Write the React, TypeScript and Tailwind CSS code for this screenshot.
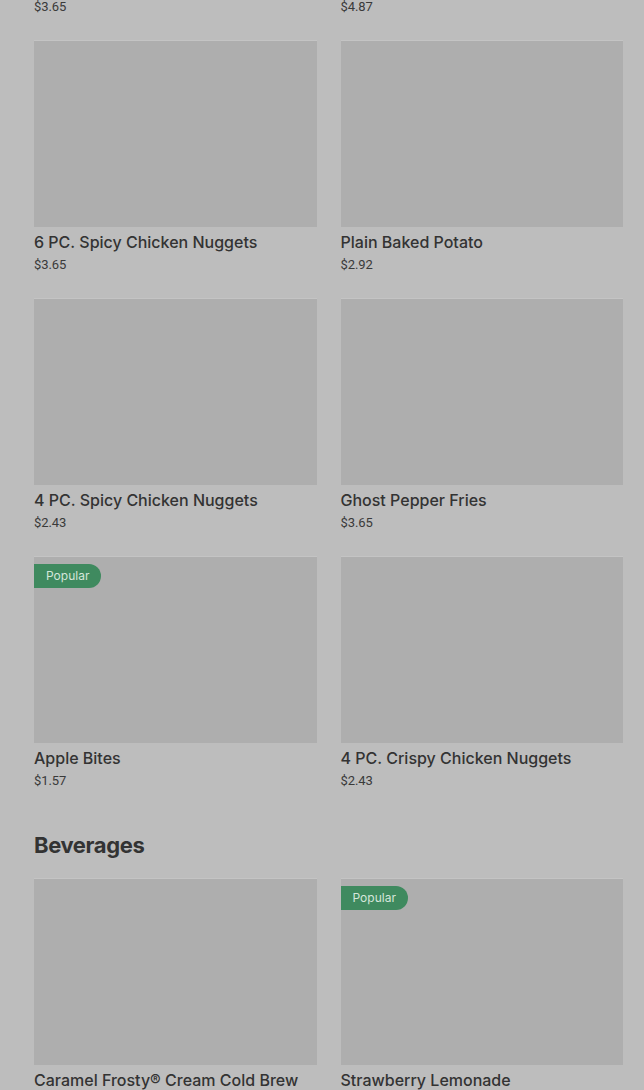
type Item = { name: string; price: string; popular?: boolean }

const sides: Item[] = [
  { name: 'Large Natural-Cut Fries', price: '$3.65' },
  { name: 'Chili', price: '$4.87' },
  { name: '6 PC. Spicy Chicken Nuggets', price: '$3.65' },
  { name: 'Plain Baked Potato', price: '$2.92' },
  { name: '4 PC. Spicy Chicken Nuggets', price: '$2.43' },
  { name: 'Ghost Pepper Fries', price: '$3.65' },
  { name: 'Apple Bites', price: '$1.57', popular: true },
  { name: '4 PC. Crispy Chicken Nuggets', price: '$2.43' },
]

const beverages: Item[] = [
  { name: 'Caramel Frosty® Cream Cold Brew', price: '$3.89' },
  { name: 'Strawberry Lemonade', price: '$2.79', popular: true },
]

function Card({ item }: { item: Item }) {
  return (
    <div className="flex flex-col">
      <div className="relative h-[187px] bg-[#aeaeae] border-t border-[#c4c4c4]">
        {item.popular && (
          <span className="absolute left-0 top-[7px] h-[24px] flex items-center pl-3 pr-3 rounded-r-full bg-[#3f8a5f] text-[12px] text-[#d4e6da] font-[Inter]">
            Popular
          </span>
        )}
      </div>
      <p className="mt-[3px] text-[16px] leading-[24px] font-medium text-[#333333] font-[Inter]">
        {item.name}
      </p>
      <p className="mt-[1px] text-[13px] leading-[20px] text-[#3a3a3a] tracking-[-0.1px]">
        {item.price}
      </p>
    </div>
  )
}

export default function App() {
  return (
    <div
      className="h-[1090px] overflow-hidden bg-[#bdbdbd]"
      style={{ fontFamily: 'Roboto, "Liberation Sans", sans-serif' }}
    >
      <div className="mt-[-218px] pl-[34px] pr-[21px]">
        {/* Sides */}
        <div className="grid grid-cols-2 gap-x-[24px] gap-y-[23px]">
          {sides.map((item) => (
            <Card key={item.name} item={item} />
          ))}
        </div>

        {/* Beverages */}
        <h2 className="mt-[39px] mb-[18px] text-[22px] leading-[30px] font-bold text-[#333333] tracking-[-0.4px] font-[Inter]">
          Beverages
        </h2>
        <div className="grid grid-cols-2 gap-x-[24px] gap-y-[23px]">
          {beverages.map((item) => (
            <Card key={item.name} item={item} />
          ))}
        </div>
      </div>
    </div>
  )
}
